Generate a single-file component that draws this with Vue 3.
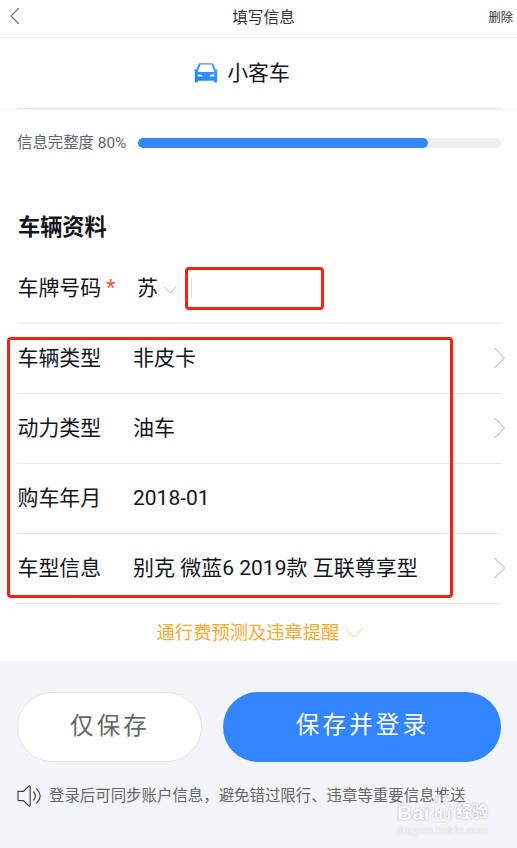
<script setup>
const rows = [
  { label: '车辆类型', value: '非皮卡', arrow: true },
  { label: '动力类型', value: '油车', arrow: true },
  { label: '购车年月', value: '2018-01', arrow: false },
  { label: '车型信息', value: '别克 微蓝6 2019款 互联尊享型', arrow: true },
]
const progress = 80
</script>

<template>
  <div class="page">
    <header class="bar">
      <svg class="back" width="12" height="18" viewBox="0 0 12 18"><path d="M9.8 1.2 2 9l7.8 7.8" /></svg>
      <h1 class="title">填写信息</h1>
      <span class="delete">删除</span>
    </header>

    <section class="kind">
      <div class="kind-inner">
        <svg class="car" width="24" height="20" viewBox="0 0 24 20">
          <defs>
            <linearGradient id="car-fill" x1="0" y1="1" x2="1" y2="0">
              <stop offset="0" stop-color="#1683ff" />
              <stop offset="1" stop-color="#4b9cff" />
            </linearGradient>
          </defs>
          <path
            fill="url(#car-fill)"
            fill-rule="evenodd"
            d="M6 .3h12q1 0 1.400 1L21.500 6.500H23q.8 0 .8.8t-.8.8h-.2q.4.7.4 1.400v8.900q0 1.100-1.100 1.100h-1q-1 0-1-1.100v-.7H3.900v.7q0 1.100-1 1.100h-1Q.8 19.500.8 18.400V9.500q0-.7.4-1.400H1q-.8 0-.8-.8T1 6.500h1.500L4.600 1.300Q5 .3 6 .3ZM6.500 1.600 3.900 8.200Q3.700 9 4.500 9H19.500Q20.300 9 20.100 8.200L17.500 1.600ZM3.800 11.600v1.900h4.400v-.9q-.2-.8-1-.8Zm16.400 0v1.900h-4.400v-.9q.2-.8 1-.8Z"
          />
        </svg>
        <span class="kind-name">小客车</span>
      </div>
    </section>

    <section class="completion">
      <span class="completion-text">信息完整度 {{ progress }}%</span>
      <div class="track"><div class="fill" :style="{ width: progress + '%' }"></div></div>
    </section>

    <h2 class="heading">车辆资料</h2>

    <section class="plate">
      <span class="label">车牌号码</span>
      <span class="star">*</span>
      <span class="province">苏</span>
      <svg class="chev" width="14" height="8" viewBox="0 0 14 8"><path d="M1 1l6 6 6-6" /></svg>
      <div class="plate-box"><i class="caret"></i></div>
    </section>

    <section class="list">
      <div v-for="row in rows" :key="row.label" class="row">
        <span class="label">{{ row.label }}</span>
        <span class="value">{{ row.value }}</span>
        <svg v-if="row.arrow" class="arrow" width="13" height="22" viewBox="0 0 13 22"><path d="M1.500 1 11.500 11l-10 10" /></svg>
      </div>
      <div class="outline"></div>
    </section>

    <section class="more">
      <span>通行费预测及违章提醒</span>
      <svg width="20" height="12" viewBox="0 0 20 12"><path d="M.7 1 10 10.500 19.300 1" /></svg>
    </section>

    <footer class="foot">
      <div class="buttons">
        <button class="btn save">仅保存</button>
        <button class="btn login">保存并登录</button>
      </div>
      <div class="note">
        <svg width="25" height="22" viewBox="0 0 25 22">
          <path d="M1 6.300h5.500L11.500 1.500q1.700-1.300 1.700.4v18.200q0 1.700-1.700.4L6.500 15.700H2q-1 0-1-1Z" />
          <path d="M16.700 7q3.300 4 0 8M19.700 3.800q7 7.200 0 14.400" />
        </svg>
        <span>登录后可同步账户信息，避免错过限行、违章等重要信息推送</span>
      </div>
      <div class="mark">
        <div class="mark-top">
          <span class="mark-bai">Bai</span>
          <span class="paw">
            <svg width="28" height="30" viewBox="0 0 28 30">
              <ellipse cx="4" cy="12" rx="3" ry="3.800" />
              <ellipse cx="10" cy="5" rx="3" ry="4.200" />
              <ellipse cx="18" cy="5" rx="3" ry="4.200" />
              <ellipse cx="24" cy="12" rx="3" ry="3.800" />
              <path d="M14 10c4 0 5 4 8 7s4 12-3 11c-4-.6-6-.6-10 0-7 1-6-8-3-11s4-7 8-7Z" />
            </svg>
            <b class="du">du</b>
          </span>
          <span class="mark-cn">经验</span>
        </div>
        <div class="mark-url">jingyan.baidu.com</div>
      </div>
    </footer>
  </div>
</template>

<style>
body {
  margin: 0;
  background: #fff;
}
</style>

<style scoped>
.page {
  width: 517px;
  height: 848px;
  overflow: hidden;
  display: flex;
  flex-direction: column;
  background: #fefefe;
  color: #12151c;
  font-family: Roboto, 'Noto Sans CJK SC', sans-serif;
  font-weight: 400;
  line-height: 30px;
}
.page * {
  box-sizing: border-box;
}
svg {
  display: block;
  flex: none;
  fill: none;
}
h1,
h2 {
  margin: 0;
}
.bar {
  height: 38px;
  border-bottom: 1px solid #eff0f2;
  display: grid;
  grid-template-columns: 1fr auto 1fr;
  align-items: center;
  padding: 0 4px 4px 9px;
  color: #333;
}
.back {
  margin-top: -2px;
}
.back path {
  stroke: #666;
  stroke-width: 1.1;
}
.title {
  font-size: 15.7px;
  line-height: 24px;
  font-weight: 400;
  padding: 2px 0 0 5px;
}
.delete {
  justify-self: end;
  padding-top: 3px;
  font-size: 12.3px;
  line-height: 20px;
}
.kind {
  height: 72px;
  padding: 0 16px 0 17px;
  border-bottom: 1px solid #f4f5f8;
}
.kind-inner {
  height: 71px;
  border-bottom: 1px solid #e4e6ef;
  display: flex;
  justify-content: center;
  align-items: center;
  gap: 9px;
  padding-right: 34px;
}
.kind-name {
  font-size: 20.9px;
}
.completion {
  height: 66px;
  padding: 0 16px 0 17px;
  display: flex;
  align-items: center;
}
.completion-text {
  width: 121px;
  font-size: 15.4px;
  color: #5e6675;
  white-space: nowrap;
}
.track {
  flex: 1;
  height: 10px;
  border-radius: 5px;
  background: #efefef;
}
.fill {
  height: 10px;
  border-radius: 5px;
  background: #3385ff;
}
.heading {
  margin-top: 31px;
  padding-left: 18px;
  height: 41px;
  line-height: 40px;
  font-size: 22.2px;
  font-weight: 700;
}
.plate {
  height: 76px;
  margin: 0 16px 0 17px;
  border-bottom: 2px solid #f0f0f1;
  display: flex;
  align-items: center;
  padding-top: 6px;
}
.label {
  width: 84px;
  padding-left: 0.500px;
  font-size: 20.9px;
  white-space: nowrap;
}
.star {
  width: 36px;
  padding: 0 0 1px 5px;
  font-size: 22px;
  color: #ff5a3c;
}
.province {
  width: 26px;
  font-size: 20.9px;
}
.chev {
  margin-top: 4px;
}
.chev path {
  stroke: #c4c4c6;
}
.plate-box {
  width: 139px;
  height: 43px;
  margin-left: 8px;
  border: 3px solid #ff1f12;
  border-radius: 4px;
  display: flex;
  align-items: center;
  padding-left: 3px;
}
.caret {
  width: 1px;
  height: 20px;
  background: #dcdcde;
}
.list {
  position: relative;
  padding: 0 11px 0 17px;
}
.row {
  height: 70px;
  padding-bottom: 2px;
  display: flex;
  align-items: center;
  background: linear-gradient(#e8e8ea, #e8e8ea) 0 100% / 484px 1px no-repeat;
}
.row .label {
  width: 116px;
}
.value {
  flex: 1;
  font-size: 21px;
  white-space: nowrap;
}
.arrow path {
  stroke: #b0b0b3;
}
.outline {
  position: absolute;
  left: 7px;
  top: 13px;
  width: 446px;
  height: 261px;
  border: 3px solid #ff1f12;
  border-radius: 4px;
}
.more {
  height: 57px;
  display: flex;
  align-items: center;
  justify-content: center;
  gap: 5px;
  padding-left: 4px;
  font-size: 18.3px;
  color: #f9a936;
}
.more path {
  stroke: #fbc982;
}
.foot {
  position: relative;
  flex: 1;
  padding: 31px 16px 0 17px;
  background: #f3f4f8;
}
.buttons {
  display: flex;
  gap: 21px;
}
.btn {
  height: 70px;
  padding: 0 0 2px 1px;
  border: 0;
  border-radius: 35px;
  font-family: inherit;
  font-size: 23.500px;
  line-height: 34px;
  letter-spacing: 3.2px;
}
.save {
  width: 185px;
  border: 1px solid #e4e4e6;
  background: #fff;
  color: #666;
}
.login {
  width: 278px;
  padding-bottom: 4px;
  background: #3385ff;
  color: #fff;
}
.note {
  margin-top: 22px;
  height: 24px;
  display: flex;
  align-items: center;
  gap: 7px;
  font-size: 15.430px;
  color: #666;
  white-space: nowrap;
}
.note path {
  stroke: #444;
  stroke-width: 1.2;
  stroke-linecap: round;
}
.mark {
  position: absolute;
  left: 397px;
  top: 133px;
  width: 96px;
  color: #fafafc;
  font-family: 'Liberation Sans', 'Noto Sans CJK SC', sans-serif;
  text-shadow: 0 0 1px #b8b9c0, 0 0 1px #b8b9c0, 0 0 2px #cdced4;
}
.mark-top {
  height: 30px;
  display: flex;
  align-items: flex-end;
}
.mark-bai {
  width: 31px;
  font-size: 21px;
  line-height: 23px;
  font-weight: 700;
}
.paw {
  position: relative;
  width: 28px;
  height: 30px;
}
.paw svg {
  fill: #fafafccc;
  stroke: #dddee3;
  stroke-width: 0.7;
}
.du {
  position: absolute;
  left: 6px;
  top: 13px;
  font-size: 14px;
  line-height: 14px;
}
.mark-cn {
  font-size: 16px;
  line-height: 24px;
  font-weight: 700;
}
.mark-url {
  font-size: 11.300px;
  line-height: 13px;
  text-shadow: 0 0 1px #cbccd2, 0 0 1px #cbccd2;
}
</style>
